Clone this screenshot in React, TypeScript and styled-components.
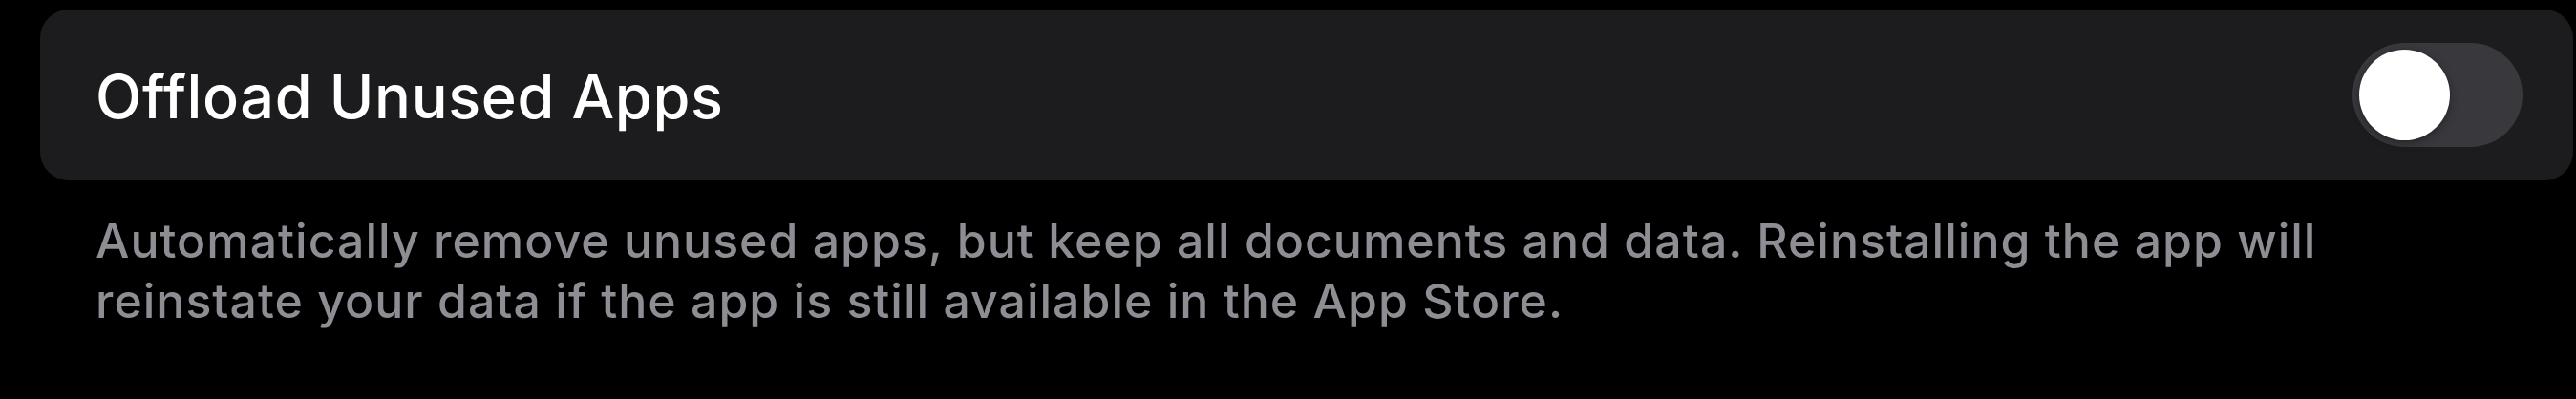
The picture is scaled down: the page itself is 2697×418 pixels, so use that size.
import React from "react";
import styled, { createGlobalStyle } from "styled-components";

const Global = createGlobalStyle`
  html, body {
    margin: 0;
    padding: 0;
    background: #000000;
  }
  body {
    font-family: Inter, "Noto Sans", "Liberation Sans", sans-serif;
    -webkit-font-smoothing: antialiased;
  }
`;

const Page = styled.div`
  display: flex;
  flex-direction: column;
  padding: 10px 3px 0 42px;
  width: 2697px;
  height: 418px;
  box-sizing: border-box;
  background: #000000;
`;

const Card = styled.div`
  display: flex;
  align-items: center;
  justify-content: space-between;
  height: 179px;
  padding: 0 53px 0 58px;
  box-sizing: border-box;
  background: #1c1c1e;
  border-radius: 30px;
`;

const Title = styled.span`
  margin-top: 3px;
  color: #ffffff;
  font-size: 63px;
  font-weight: 500;
  letter-spacing: 0.65px;
  line-height: 1;
`;

const Track = styled.button<{ $on: boolean }>`
  display: flex;
  align-items: center;
  justify-content: ${(p) => (p.$on ? "flex-end" : "flex-start")};
  width: 178px;
  height: 109px;
  padding: 0 7px;
  box-sizing: border-box;
  border: none;
  border-radius: 55px;
  background: ${(p) => (p.$on ? "#34c759" : "#39393d")};
  cursor: pointer;
`;

const Knob = styled.span`
  display: block;
  width: 95px;
  height: 95px;
  border-radius: 50%;
  background: #ffffff;
  box-shadow: 0 3px 10px rgba(0, 0, 0, 0.35), 0 0 0 1px rgba(0, 0, 0, 0.08);
`;

const Footer = styled.p`
  margin: 0;
  padding: 32px 0 0 58px;
  width: 2460px;
  box-sizing: border-box;
  color: #8d8d93;
  font-size: 50px;
  font-weight: 500;
  line-height: 63px;
  letter-spacing: 1px;
`;

export default function App() {
  const [on, setOn] = React.useState(false);
  return (
    <>
      <Global />
      <Page>
        <Card>
          <Title>Offload Unused Apps</Title>
          <Track $on={on} onClick={() => setOn(!on)} aria-pressed={on}>
            <Knob />
          </Track>
        </Card>
        <Footer>
          Automatically remove unused apps, but keep all documents and data. Reinstalling the app will
          reinstate your data if the app is still available in the App Store.
        </Footer>
      </Page>
    </>
  );
}
